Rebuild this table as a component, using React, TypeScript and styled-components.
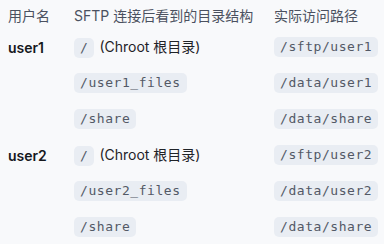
import React from "react";
import styled, { createGlobalStyle } from "styled-components";

const GlobalStyle = createGlobalStyle`
    html, body {
        margin: 0;
        padding: 0;
        background: #f8f9fb;
    }
    body {
        font-family: Inter, "Noto Sans CJK SC", sans-serif;
        font-size: 14px;
        color: #1f2328;
    }
`;

const Table = styled.div`
    padding: 0 0 0 8px;
    width: 384px;
    box-sizing: border-box;
`;

type RowProps = {
    head?: boolean,
}

const Row = styled.div<RowProps>`
    display: grid;
    grid-template-columns: 66px 200px 1fr;
    align-items: center;
    height: ${(p) => (p.head ? 29 : 36)}px;
    color: ${(p) => (p.head ? "#4b5160" : "#1f2328")};
`;

const Cell = styled.div`
    white-space: nowrap;
`;

const UserCell = styled(Cell)`
    font-weight: 600;
    color: #16181d;
`;

const Code = styled.code`
    display: inline-block;
    font-family: "DejaVu Sans Mono", monospace;
    font-size: 13px;
    letter-spacing: 0.55px;
    line-height: 20px;
    padding: 0 6px;
    border-radius: 5px;
    background: #e9edf3;
    color: #535966;
`;

const Note = styled.span`
    margin-left: 5px;
`;

type Entry = {
    user?: string,
    dir: string,
    note?: string,
    real: string,
}

const rows: Entry[] = [
    { user: "user1", dir: "/", note: "(Chroot 根目录)", real: "/sftp/user1" },
    { dir: "/user1_files", real: "/data/user1" },
    { dir: "/share", real: "/data/share" },
    { user: "user2", dir: "/", note: "(Chroot 根目录)", real: "/sftp/user2" },
    { dir: "/user2_files", real: "/data/user2" },
    { dir: "/share", real: "/data/share" },
];

export default function App(): JSX.Element {
    return (
        <>
            <GlobalStyle />
            <Table>
                <Row head>
                    <Cell>用户名</Cell>
                    <Cell>SFTP 连接后看到的目录结构</Cell>
                    <Cell>实际访问路径</Cell>
                </Row>
                {rows.map((r, i) => (
                    <Row key={i}>
                        <UserCell>{r.user}</UserCell>
                        <Cell>
                            <Code>{r.dir}</Code>
                            {r.note && <Note>{r.note}</Note>}
                        </Cell>
                        <Cell>
                            <Code>{r.real}</Code>
                        </Cell>
                    </Row>
                ))}
            </Table>
        </>
    );
}
